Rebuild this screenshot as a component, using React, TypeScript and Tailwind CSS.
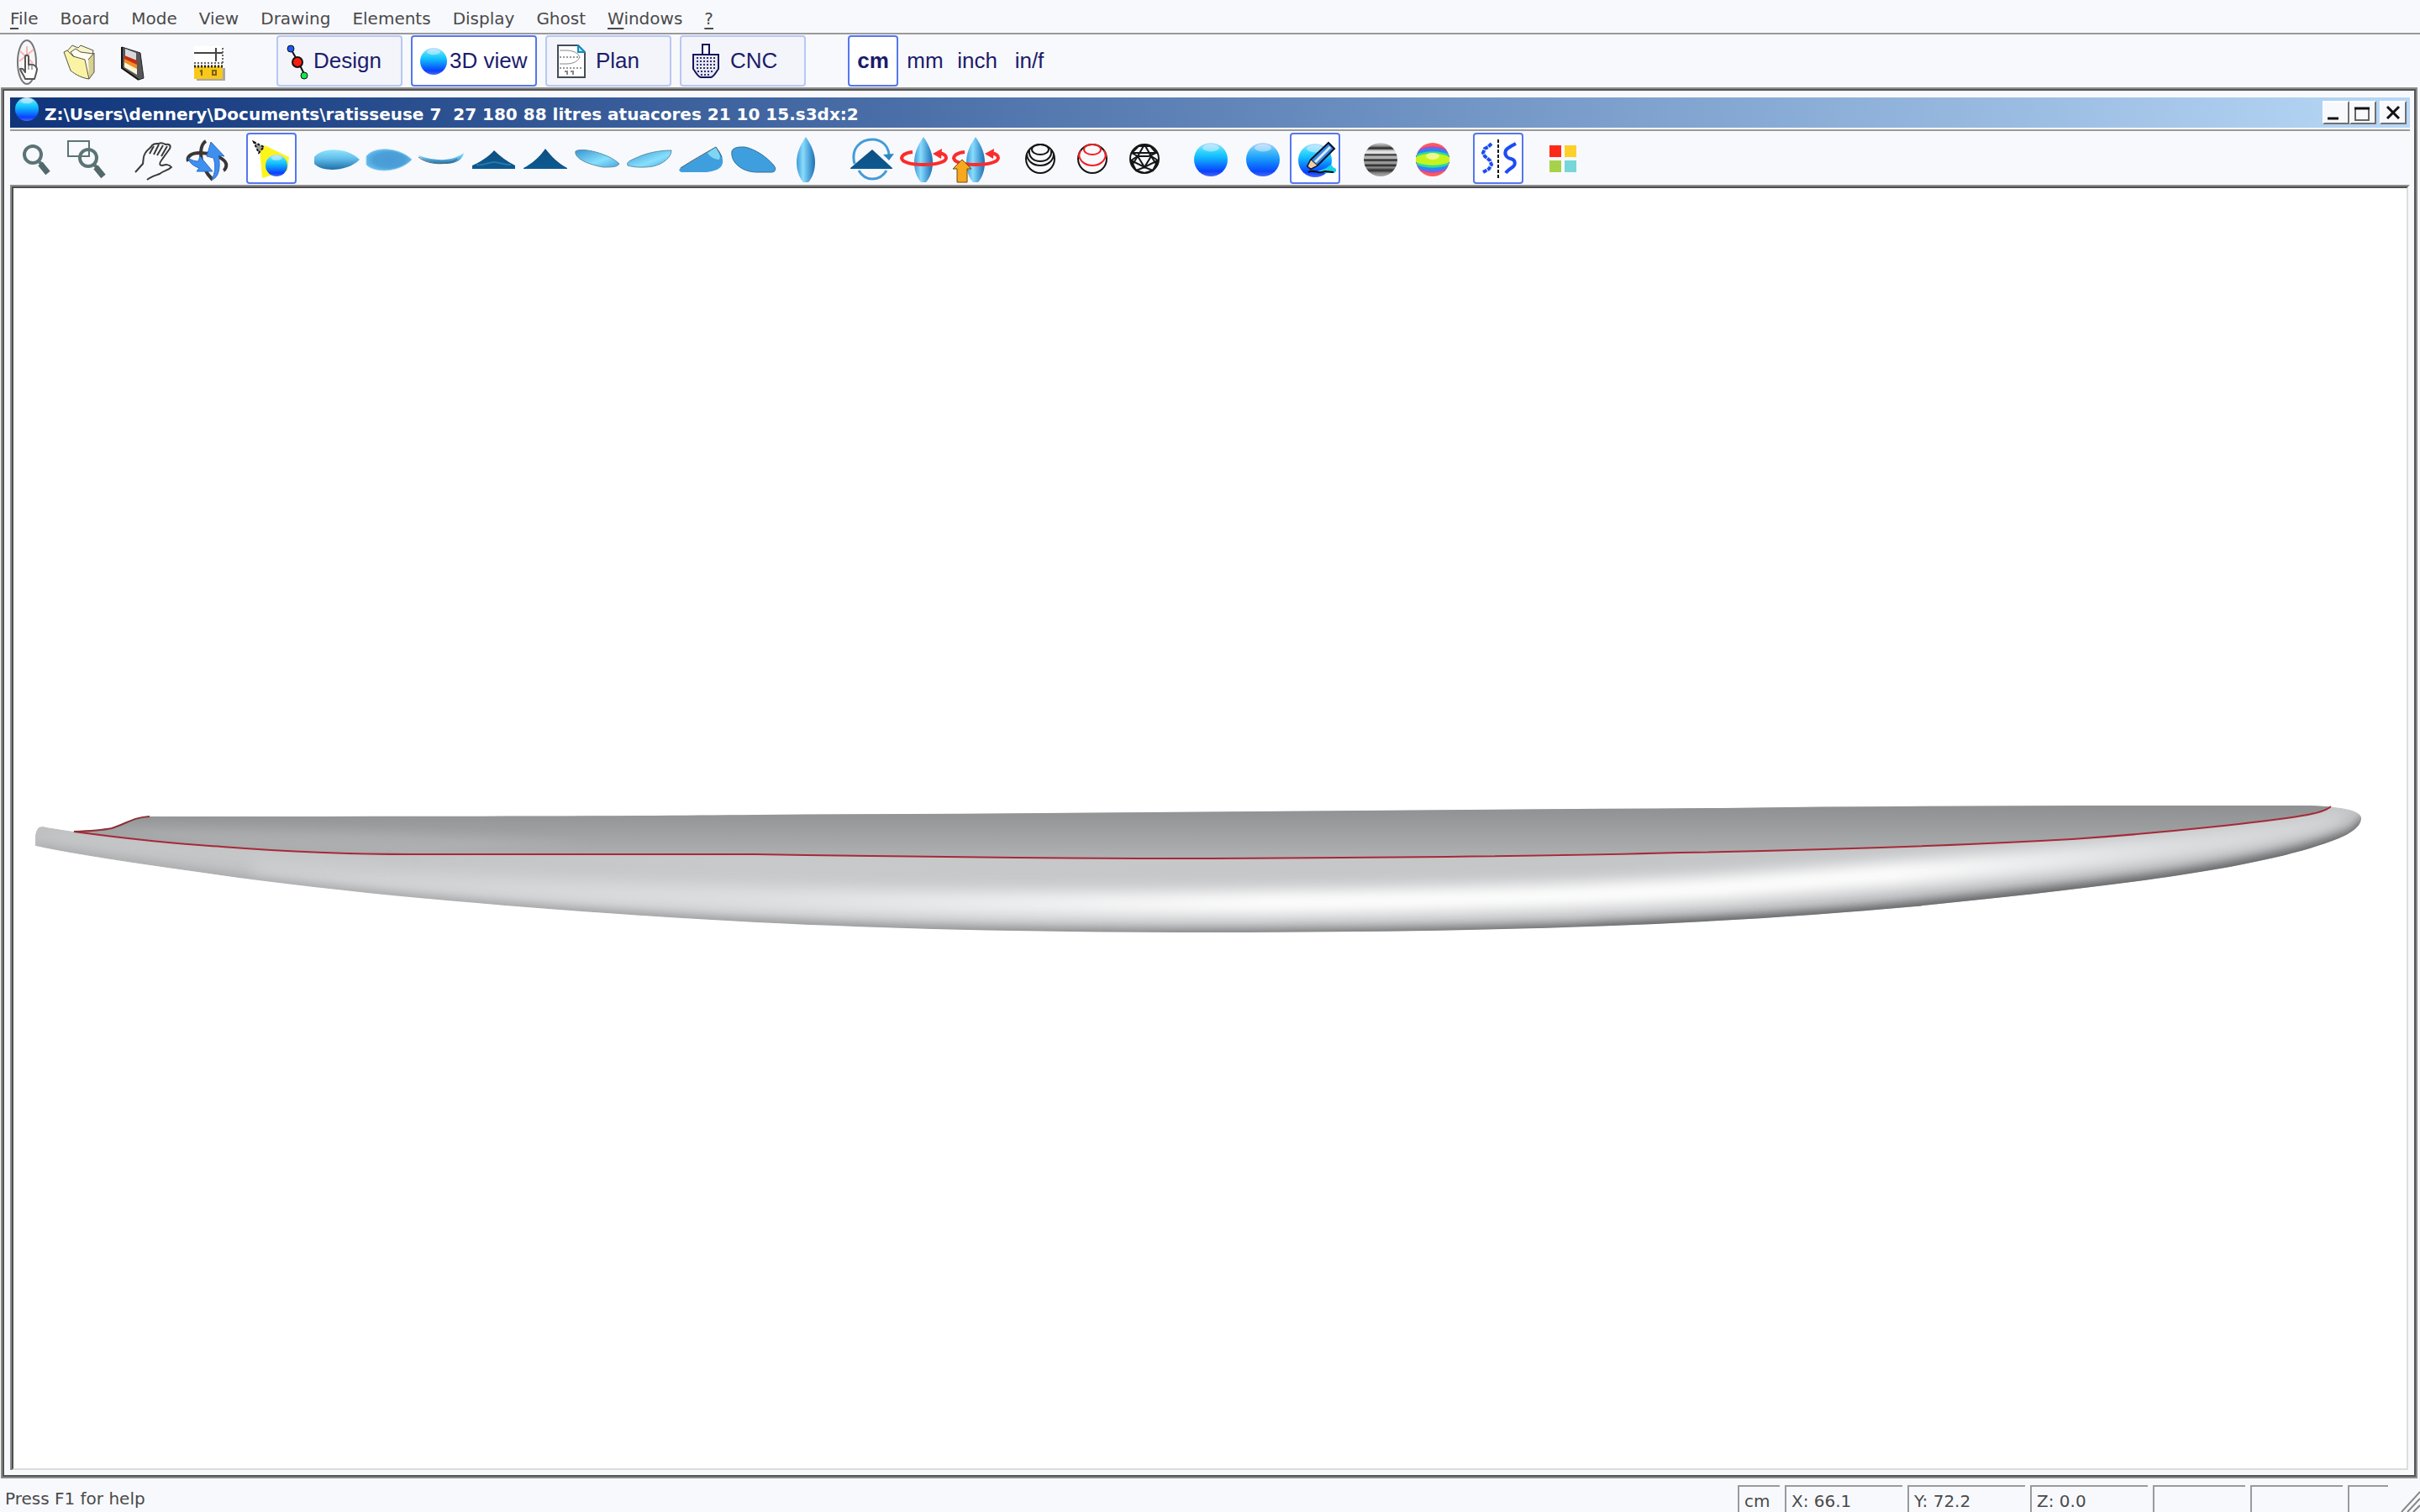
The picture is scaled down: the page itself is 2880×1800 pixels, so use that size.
import type { ReactNode } from 'react'
import clsx from 'clsx'

const menus = ['_File', 'Board', 'Mode', 'View', 'Drawing', 'Elements', 'Display', 'Ghost', '_Windows', '_?']

function Defs() {
  return (
    <svg className="absolute h-0 w-0" aria-hidden="true">
      <defs>
        <linearGradient id="ball" x1="0" y1="0" x2="0" y2="1">
          <stop offset="0" stopColor="#b8dcff" />
          <stop offset="0.22" stopColor="#3cd8fa" />
          <stop offset="0.4" stopColor="#14c0ff" />
          <stop offset="0.62" stopColor="#0c84ff" />
          <stop offset="0.85" stopColor="#0a40ff" />
          <stop offset="1" stopColor="#4a6cf0" />
        </linearGradient>
        <linearGradient id="ballDim" x1="0" y1="0" x2="0" y2="1">
          <stop offset="0" stopColor="#b8d4fc" />
          <stop offset="0.25" stopColor="#48bcf8" />
          <stop offset="0.5" stopColor="#1496fc" />
          <stop offset="0.85" stopColor="#0a48ff" />
          <stop offset="1" stopColor="#4a6cf0" />
        </linearGradient>
        <linearGradient id="deck" x1="0" y1="0" x2="0" y2="1">
          <stop offset="0" stopColor="#8fe6fc" />
          <stop offset="0.45" stopColor="#62bcea" />
          <stop offset="1" stopColor="#1d6fa8" />
        </linearGradient>
        <linearGradient id="thin" x1="0" y1="0" x2="1" y2="1">
          <stop offset="0" stopColor="#3a94d2" />
          <stop offset="0.6" stopColor="#86e0fc" />
          <stop offset="1" stopColor="#4aa4dc" />
        </linearGradient>
        <radialGradient id="bottom">
          <stop offset="0" stopColor="#4a9ad4" />
          <stop offset="0.7" stopColor="#4ba0da" />
          <stop offset="1" stopColor="#5fb6e8" />
        </radialGradient>
        <linearGradient id="up" x1="0" y1="0" x2="1" y2="0">
          <stop offset="0" stopColor="#3f9bd8" />
          <stop offset="0.35" stopColor="#8adcfb" />
          <stop offset="0.7" stopColor="#4aa0d8" />
          <stop offset="1" stopColor="#1f6fae" />
        </linearGradient>
        <linearGradient id="peak" x1="0" y1="0" x2="0" y2="1">
          <stop offset="0" stopColor="#0f4f80" />
          <stop offset="1" stopColor="#0b5a92" />
        </linearGradient>
        <linearGradient id="stripes" x1="0" y1="0" x2="0" y2="1">
          <stop offset="0" stopColor="#d8d8d8" />
          <stop offset="0.1" stopColor="#8a8a8a" />
          <stop offset="0.16" stopColor="#222" />
          <stop offset="0.24" stopColor="#d8d8d8" />
          <stop offset="0.31" stopColor="#e8e8e8" />
          <stop offset="0.35" stopColor="#222" />
          <stop offset="0.41" stopColor="#b4b4b4" />
          <stop offset="0.47" stopColor="#aaa" />
          <stop offset="0.51" stopColor="#1c1c1c" />
          <stop offset="0.57" stopColor="#9a9a9a" />
          <stop offset="0.62" stopColor="#999" />
          <stop offset="0.67" stopColor="#1c1c1c" />
          <stop offset="0.73" stopColor="#909090" />
          <stop offset="0.82" stopColor="#2c2c2c" />
          <stop offset="0.9" stopColor="#8a8a8a" />
          <stop offset="1" stopColor="#aaa" />
        </linearGradient>
      </defs>
    </svg>
  )
}

function Icon({ children }: { children: ReactNode }) {
  return (
    <svg viewBox="0 0 60 60" className="h-[60px] w-[60px] shrink-0" fill="none" aria-hidden="true">
      {children}
    </svg>
  )
}

function Ball({ cx = 30, cy = 31, r = 20, fill = 'url(#ball)' }: { cx?: number; cy?: number; r?: number; fill?: string }) {
  return (
    <>
      <circle cx={cx} cy={cy} r={r} fill={fill} />
      <ellipse cx={cx} cy={cy - r * 0.7} rx={r * 0.5} ry={r * 0.22} fill="#e8f4ff" opacity="0.5" />
    </>
  )
}

function RedRing({ children }: { children: ReactNode }) {
  return (
    <>
      <path d="M17 22C8 23 4 26 4 30" stroke="#fb2c2c" strokeWidth="4" />
      {children}
      <path d="M4 29C4 34 15 37 30 37s27-3 27-8c0-3-3-5-8-6" stroke="#fb2c2c" strokeWidth="4" />
      <path d="M41 24l11-6-1 12z" fill="#fb2c2c" />
    </>
  )
}

const upright = 'M30 4C37 14 41 24 41 34c0 10-3 18-8 24h-6c-5-6-8-14-8-24C19 24 23 14 30 4Z'

const icons: Record<string, ReactNode> = {
  Zoom: (
    <>
      <circle cx="26" cy="25" r="10" stroke="#5b7476" strokeWidth="4" />
      <path d="M33 33l4 4" stroke="#5b7476" strokeWidth="4" />
      <path d="M35 36l9 11" stroke="#52696b" strokeWidth="7" />
    </>
  ),
  'Zoom window': (
    <>
      <rect x="6" y="9" width="25" height="18" stroke="#5b7476" strokeWidth="2" />
      <circle cx="30" cy="29" r="10" stroke="#5b7476" strokeWidth="4" />
      <path d="M37 37l4 4" stroke="#5b7476" strokeWidth="4" />
      <path d="M39 40l9 11" stroke="#52696b" strokeWidth="7" />
    </>
  ),
  Pan: (
    <g stroke="#3a3a3a" strokeWidth="2" strokeLinejoin="round">
      <path d="M8 46l9-10c1-6 0-9 3-13 2-4 6-5 8-9 3-3 6-2 8-2 3-2 6 0 8 1 4-1 7 1 5 5L39 32c-3 4-2 6 1 6 4-1 8-2 11 2-4 4-9 4-14 8-5 2-10 3-15 7" />
      <path d="M30 15l-5 9M36 13l-6 12M41 14l-7 12M46 15l-7 12" />
    </g>
  ),
  Rotate: (
    <>
      <path d="M30 9c-7 4-8 18-2 32 3 6 6 10 10 14" stroke="#3a3636" strokeWidth="4" />
      <path d="M9 33c-2-6 4-10 14-10 15 0 30 7 31 13 1 3-1 7-3 8" stroke="#3a3636" strokeWidth="4" />
      <path d="M36 10l16 17-7-1c3 15 0 27-8 29 4-8 5-17 2-26l-8-2z" fill="#3f8fee" stroke="#2a6ed0" strokeWidth="1" />
      <path d="M23 27l15 18H19l3-4c-6-2-12-6-13-12 4 3 8 4 12 4z" fill="#3f8fee" stroke="#2a6ed0" strokeWidth="1" />
    </>
  ),
  Light: (
    <>
      <path d="M16 18l6-4 29 14-2 16-30 9z" fill="#fdf41c" />
      <path d="M9 10l12 6-6 7z" fill="#999" stroke="#111" strokeWidth="2" strokeDasharray="3 2" />
      <Ball cx={36} cy={38} r={13} />
    </>
  ),
  Top: <path d="M3 28C12 16 42 16 57 31C42 46 12 46 3 36Z" fill="url(#deck)" />,
  Bottom: <path d="M3 27C12 15 42 16 57 31C42 47 12 47 3 37Z" fill="url(#bottom)" stroke="#8fd0f0" strokeWidth="1" />,
  Side: (
    <>
      <path d="M3 26c13 5 31 7 42 3 6-2 9-4 12-6-1 7-8 13-22 13C19 36 8 33 3 26Z" fill="url(#deck)" />
      <path d="M3 28c12 10 36 10 46 2" stroke="#4f6270" strokeWidth="1" />
    </>
  ),
  Front: (
    <>
      <path d="M31 20c7 7 15 13 25 18v4H5v-4c9-4 19-10 26-18Z" fill="url(#peak)" />
      <path d="M10 37c8 2 13-3 21-3s13 4 20 3" stroke="#2a76a8" strokeWidth="2" />
    </>
  ),
  Back: <path d="M30 18c7 9 15 17 26 23v1H4v-1c10-5 20-14 26-23Z" fill="url(#peak)" />,
  'View A': <path d="M4 21C12 16 44 24 56 36c-2 4-10 4-19 4C20 37 2 30 4 21Z" fill="url(#thin)" stroke="#5b8fa8" strokeWidth="1" />,
  'View B': <path d="M56 20c0 8-9 16-22 19-12 2-24 1-30-1-2-4 3-6 10-9 12-6 28-9 42-9Z" fill="url(#thin)" stroke="#5b8fa8" strokeWidth="1" />,
  'View C': (
    <>
      <path d="M47 16c7 7 10 16 7 22-3 5-10 7-18 8H6c-3-1-4-3 0-6z" fill="#3f9fde" />
      <path d="M47 16c4 6 6 11 4 15-6 0-12-4-14-8z" fill="#8fe4fa" opacity="0.8" />
      <path d="M5 41c12-8 28-17 42-25l7 12" stroke="#47606c" strokeWidth="1" />
    </>
  ),
  'View D': <path d="M4 21c2-5 8-5 15-5 12 2 27 12 35 22 3 4 2 8-3 8H34C17 46 2 35 4 21Z" fill="#3f9fde" stroke="#2f6f9c" strokeWidth="1" />,
  'View E': <path d={upright} fill="url(#up)" />,
  Roll: (
    <>
      <path d="M10 36C5 17 18 7 31 7c12 0 19 8 20 18M15 44c4 7 10 10 16 10s13-3 17-10" stroke="#449cd6" strokeWidth="3" />
      <path d="M44 25l13-1-6 8z" fill="#2f86c4" />
      <path d="M31 19l24 22v1H5v-1z" fill="url(#peak)" />
    </>
  ),
  Spin: (
    <RedRing>
      <path d={upright} fill="url(#up)" />
    </RedRing>
  ),
  'Spin up': (
    <>
      <RedRing>
        <path d={upright} fill="url(#up)" />
      </RedRing>
      <path d="M14 31l11 11h-5v16H8V42H3z" fill="#f7a81c" stroke="#6b4a10" strokeWidth="1" />
    </>
  ),
  Slices: (
    <g stroke="#151515" strokeWidth="2">
      <circle cx="29" cy="30" r="17" />
      <ellipse cx="29" cy="19" rx="10" ry="6" />
      <path d="M16 20c-1 8 5 13 13 13s14-5 13-13" />
      <path d="M13 24c0 9 8 14 16 14s16-5 16-14" />
    </g>
  ),
  'Red slices': (
    <g strokeWidth="2">
      <circle cx="29" cy="30" r="17" stroke="#151515" />
      <g stroke="#f42020">
        <ellipse cx="29" cy="19" rx="10" ry="6" />
        <path d="M13 24c0 9 8 14 16 14s16-5 16-14" />
        <path d="M15 20c-1 3-2 5-2 8M43 20c1 3 2 5 2 8" />
      </g>
    </g>
  ),
  Mesh: (
    <g stroke="#151515" strokeWidth="2">
      <circle cx="29" cy="30" r="17" />
      <path d="M22 15l14 0 7 8-9 4H21l-7-4zM21 27l8 13 8-13 8 5-6 12-10-4-10 4-6-12zM29 13l-8 14M29 13l8 14M19 44l10 3 10-3M13 32l16 8 16-8" />
      <path d="M14 23l30 0M14 38l7-11M44 38l-7-11" />
    </g>
  ),
  Smooth: <Ball />,
  Shaded: <Ball fill="url(#ballDim)" />,
  Paint: (
    <>
      <Ball cy={32} />
      <path d="M30 47c4-4 12-4 16-8 3-3 5-1 5 1 4 1 6 4 2 7H32z" fill="#16d4e4" />
      <path d="M22 46c8-4 10 3 20-1l10 1" stroke="#0a0a14" strokeWidth="2" />
      <path d="M21 39l4-8L46 11l7 7-20 20-8 4z" fill="#3a8ae0" stroke="#08102a" strokeWidth="2" />
      <path d="M30 34l18-18" stroke="#d8ecff" strokeWidth="3" />
      <path d="M25 31l8 7-8 4-4-3z" fill="#f2cfa0" stroke="#08102a" strokeWidth="1" />
    </>
  ),
  Zebra: <circle cx="30" cy="31" r="20" fill="url(#stripes)" />,
  Curvature: (
    <>
      <circle cx="30" cy="31" r="20" fill="#ff5a5a" />
      <path d="M15 18c9-4 21-4 30 0l5 9v8l-5 9c-9 4-21 4-30 0l-5-9v-8z" fill="#b24cc8" />
      <path d="M13 21c10-5 24-5 34 0l3 8v4l-3 8c-10 5-24 5-34 0l-3-8v-4z" fill="#2c86f4" />
      <path d="M11 25c11-5 27-5 38 0v12c-11 5-27 5-38 0z" fill="#2cdc9c" />
      <path d="M10 28c12-6 28-6 40 0v6c-12 5-28 5-40 0z" fill="#c4f41c" />
      <ellipse cx="30" cy="27" rx="8" ry="4" fill="#eef88c" />
    </>
  ),
  Symmetry: (
    <>
      <path d="M22 12l-4 4-4 2-2 5 2 4 6 5 2 5-3 5-7 4" stroke="#1c4cf4" strokeWidth="4" strokeDasharray="5 1" />
      <path d="M30 7v47" stroke="#141414" strokeWidth="2" strokeDasharray="4 2" />
      <path d="M51 12c-4 2-9 4-12 8-2 5 1 9 6 10 7 2 5 8 2 10-3 2-6 4-8 7" stroke="#1c4cf4" strokeWidth="4" />
    </>
  ),
  Colors: (
    <>
      <path d="M13 14h14v14H13z" fill="#fd2a1a" />
      <path d="M31 14h14v14H31z" fill="#fdd02c" />
      <path d="M13 32h14v14H13z" fill="#a6d24a" />
      <path d="M31 32h14v14H31z" fill="#76d6d8" />
    </>
  ),
  New: (
    <>
      <ellipse cx="29" cy="31" rx="11" ry="26" fill="#f6f6f8" stroke="#777" strokeWidth="2" />
      <path d="M21 18l15 14M37 16L20 30M29 12v20" stroke="#ff9a94" strokeWidth="2" opacity="0.7" />
      <path d="M27 43V25c0-3 4-3 4 0v9c5-1 9 1 10 5 0 4-2 8-3 12H27c-2-5-5-8-6-12 2-1 4 0 6 4Z" fill="#fff" stroke="#555" strokeWidth="2" strokeLinejoin="round" />
      <path d="M31 34v6M35 35v5" stroke="#555" strokeWidth="1" />
    </>
  ),
  Open: (
    <g stroke="#55554c" strokeWidth="1" strokeLinejoin="round">
      <path d="M13 20l8-9 7 3 3-3 15 6-6 34z" fill="#f8f6c8" />
      <path d="M19 19l6-4 6 4 15 2-5 28z" fill="#fffdf0" />
      <path d="M11 19l4-2 7 7 14 4 5 23c-8-1-16-5-22-10z" fill="#fbf3a4" />
      <path d="M41 51l6-8V20l-7 8" fill="#d8d090" />
    </g>
  ),
  Save: (
    <>
      <path d="M18 13l22 7 4 30-6 2-20-14z" fill="#56565a" stroke="#222" strokeWidth="1" />
      <path d="M22 15l13 5v9l-13-5z" fill="#d8d8dc" />
      <path d="M21 23l15 6v5l-15-7z" fill="#c82c10" />
      <path d="M21 27l15 7v5l-15-8z" fill="#f88c1c" />
      <path d="M21 31l15 8v7l-15-9z" fill="#fff4d0" />
      <path d="M18 13v25l20 14" stroke="#111" strokeWidth="2" />
    </>
  ),
  Measure: (
    <>
      <path d="M12 12h33v20H12z" fill="#fff" />
      <path d="M12 20h34M38 14v16" stroke="#444" strokeWidth="2" />
      <path d="M12 32h34M46 14v18" stroke="#666" strokeWidth="2" strokeDasharray="2 2" />
      <path d="M15 38h34v15H15z" fill="#a8a8a4" />
      <path d="M12 36h34v15H12z" fill="#f8c81c" />
      <path d="M12 36h34" stroke="#222" strokeWidth="3" strokeDasharray="2 2" />
      <path d="M19 42l2-1v6M34 41h4v5h-4z" stroke="#7c6410" strokeWidth="2" />
    </>
  ),
}

const btn = 'flex h-[61px] items-center justify-center rounded-sm border-2'
const idle = 'border-transparent'
const active = 'border-[#5577ee] bg-white'

function ToolButton({ name, on }: { name: string; on?: boolean }) {
  return (
    <button type="button" aria-label={name} aria-pressed={!!on} className={clsx(btn, 'w-[60px]', on ? active : idle)}>
      <Icon>{icons[name]}</Icon>
    </button>
  )
}

const viewTools = [
  ['Zoom', 'Zoom window'],
  ['Pan', 'Rotate'],
  ['Light'],
  ['Top', 'Bottom', 'Side', 'Front', 'Back', 'View A', 'View B', 'View C', 'View D', 'View E'],
  ['Roll', 'Spin', 'Spin up'],
  ['Slices', 'Red slices', 'Mesh'],
  ['Smooth', 'Shaded', 'Paint'],
  ['Zebra', 'Curvature'],
  ['Symmetry'],
  ['Colors'],
]
const pressed = ['Light', 'Paint', 'Symmetry']

const modes: { name: string; icon: ReactNode; inset: string }[] = [
  {
    name: 'Design',
    inset: 'pl-2',
    icon: (
      <svg viewBox="0 0 34 46" className="h-[46px] w-[34px]" aria-hidden="true">
        <path d="M7 8l9 16 8 16" stroke="#111" strokeWidth="2" fill="none" />
        <circle cx="7" cy="8" r="4" fill="#2058f8" stroke="#111" />
        <circle cx="15" cy="24" r="6" fill="#fb1c10" stroke="#111" strokeWidth="2" />
        <circle cx="23" cy="40" r="4" fill="#10e850" stroke="#111" />
      </svg>
    ),
  },
  {
    name: '3D view',
    inset: 'pl-2 gap-[2px]',
    icon: (
      <svg viewBox="0 0 34 34" className="h-[34px] w-[34px]" aria-hidden="true">
        <Ball cx={17} cy={17} r={16} />
      </svg>
    ),
  },
  {
    name: 'Plan',
    inset: 'pl-3 gap-3',
    icon: (
      <svg viewBox="0 0 34 40" className="h-[40px] w-[34px]" fill="none" aria-hidden="true">
        <path d="M1 1h24l8 9v29H1z" fill="#fff" stroke="#444c54" strokeWidth="2" />
        <path d="M25 1v8h8z" fill="#9ce4f8" stroke="#1888b4" strokeWidth="2" />
        <path d="M3 7h8c8 0 14 3 16 8-2 5-8 8-16 8H3" stroke="#888" strokeWidth="1" />
        <path d="M3 15h24M3 28h26" stroke="#999" strokeWidth="2" strokeDasharray="2 2" />
        <path d="M9 32h3v4M16 32h3v4" stroke="#888" strokeWidth="2" />
      </svg>
    ),
  },
  {
    name: 'CNC',
    inset: 'pl-3 gap-3',
    icon: (
      <svg viewBox="0 0 34 42" className="h-[42px] w-[34px]" fill="none" aria-hidden="true">
        <path d="M13 13V1h8v12" fill="#fff" stroke="#14145c" strokeWidth="2" />
        <path d="M2 13h30v17c-3 4-5 9-9 10H11c-4-1-6-6-9-10z" fill="#e8e8f4" stroke="#14145c" strokeWidth="2" />
        <path d="M6 17h24M6 21h24M6 25h24M6 29h24M7 33h20M11 37h12" stroke="#30306c" strokeWidth="2" strokeDasharray="2 2" />
      </svg>
    ),
  },
]

const hull =
  'M46 985Q50 983 56 985L88 990Q118 989 133 986C152 980 158 973 178 972C420 972 700 972 900 970C1300 968 1700 964 2050 962C2280 959 2520 959 2740 959C2775 959 2808 963 2810 973C2811 982 2800 990 2790 995C2700 1035 2500 1056 2280 1079C2000 1105 1700 1110 1440 1110C1250 1110 1060 1106 900 1098C620 1083 400 1062 235 1038C160 1028 90 1017 42 1007V994Q43 988 46 985Z'
const apex =
  'M88 990C140 997 200 1004 264 1008C330 1013 410 1017 488 1017L900 1017C1080 1020 1240 1022 1440 1022C1640 1021 1860 1019 2000 1015C2180 1012 2340 1006 2466 999C2570 992 2700 978 2740 971Q2766 967 2774 960'

function Board() {
  return (
    <svg viewBox="16 224 2848 1524" className="block h-auto w-full" role="img" aria-label="Board">
      <defs>
        <clipPath id="hull">
          <path d={hull} />
        </clipPath>
        <clipPath id="deckClip">
          <path d={apex + 'V900H88Z'} />
        </clipPath>
        <linearGradient id="deckShade" x1="0" y1="958" x2="0" y2="1022" gradientUnits="userSpaceOnUse">
          <stop offset="0" stopColor="#8e9092" />
          <stop offset="0.25" stopColor="#969798" />
          <stop offset="1" stopColor="#b0b1b3" />
        </linearGradient>
        <linearGradient id="body" x1="0" y1="0" x2="1" y2="0">
          <stop offset="0" stopColor="#c0c1c3" />
          <stop offset="0.3" stopColor="#c8c9cb" />
          <stop offset="1" stopColor="#c2c3c5" />
        </linearGradient>
        <linearGradient id="shine" x1="300" y1="0" x2="2810" y2="0" gradientUnits="userSpaceOnUse">
          <stop offset="0" stopColor="#d4d5d7" stopOpacity="0.6" />
          <stop offset="0.25" stopColor="#e0e1e3" />
          <stop offset="0.48" stopColor="#fff" />
          <stop offset="0.78" stopColor="#fff" />
          <stop offset="0.9" stopColor="#e0e1e3" />
          <stop offset="1" stopColor="#d0d1d3" />
        </linearGradient>
        <linearGradient id="rim" x1="42" y1="0" x2="2810" y2="0" gradientUnits="userSpaceOnUse">
          <stop offset="0" stopColor="#8d8e90" stopOpacity="0.4" />
          <stop offset="0.4" stopColor="#737476" stopOpacity="0.7" />
          <stop offset="0.7" stopColor="#58595b" />
          <stop offset="1" stopColor="#606163" />
        </linearGradient>
        <filter id="soft" x="0" y="900" width="2880" height="300" filterUnits="userSpaceOnUse">
          <feGaussianBlur stdDeviation="9" />
        </filter>
        <filter id="softer" x="0" y="900" width="2880" height="300" filterUnits="userSpaceOnUse">
          <feGaussianBlur stdDeviation="6" />
        </filter>
      </defs>
      <g clipPath="url(#hull)" fill="none">
        <path d={hull} fill="url(#body)" />
        <path
          d="M300 1036C600 1066 1000 1078 1400 1076C1700 1074 1900 1067 2050 1057C2300 1038 2560 1018 2790 980"
          stroke="url(#shine)"
          strokeWidth="30"
          filter="url(#soft)"
        />
        <path
          d="M42 1012C90 1022 160 1033 235 1043C400 1067 620 1088 900 1103C1060 1111 1250 1115 1440 1115C1700 1115 2000 1110 2280 1084C2500 1061 2700 1040 2800 998L2822 976"
          stroke="url(#rim)"
          strokeWidth="18"
          filter="url(#softer)"
        />
        <path
          d="M1900 1116C2060 1109 2180 1098 2290 1084C2500 1061 2700 1038 2800 996"
          stroke="#66676a"
          strokeWidth="20"
          opacity="0.6"
          filter="url(#soft)"
        />
        <path d="M42 998C200 1020 380 1040 500 1030C380 1016 200 1005 88 990Z" fill="#cbccce" opacity="0.4" filter="url(#softer)" />
        <g clipPath="url(#deckClip)">
          <path d="M80 950H2800V1030H80Z" fill="url(#deckShade)" />
          <path d="M88 985C300 985 500 990 700 1005L500 1017L264 1008Z" fill="#b4b5b7" opacity="0.5" filter="url(#softer)" />
        </g>
      </g>
      <path d={apex} fill="none" stroke="#a52a38" strokeWidth="2" />
      <path d="M88 990Q118 989 133 986C152 980 158 973 178 972" fill="none" stroke="#8c3038" strokeWidth="2" />
    </svg>
  )
}

const winBtn =
  'flex h-7 w-8 items-center justify-center border-2 border-t-white border-l-white border-r-[#707074] border-b-[#707074] bg-[#f8f9fd]'

const fields = [
  ['cm', 'w-[50px]'],
  ['X: 66.1', 'w-[140px]'],
  ['Y: 72.2', 'w-[140px]'],
  ['Z: 0.0', 'w-[140px]'],
  ['', 'w-[110px]'],
  ['', 'w-[110px]'],
  ['', 'w-[48px]'],
]

export default function App() {
  return (
    <div className="flex min-h-screen flex-col overflow-hidden bg-[#f8f9fd] font-['DejaVu_Sans',sans-serif] text-[20px] text-[#4a4a4a]">
      <Defs />
      <nav className="flex h-[41px] items-center gap-[26px] border-b-2 border-[#9a9a9a] pt-1 pl-3">
        {menus.map((m) => (
          <button key={m} type="button">
            {m[0] === '_' ? (
              <>
                <span className="underline underline-offset-4">{m[1]}</span>
                {m.slice(2)}
              </>
            ) : (
              m
            )}
          </button>
        ))}
      </nav>

      <div className="flex h-[63px] items-center gap-[2px] pl-[3px] font-['Liberation_Sans',sans-serif] text-[26px] text-[#1c1c6c]">
        <ToolButton name="New" />
        <ToolButton name="Open" />
        <ToolButton name="Save" />
        <div className="w-7" />
        <ToolButton name="Measure" />
        <div className="ml-12 flex gap-[10px]">
          {modes.map((m) => (
            <button
              key={m.name}
              type="button"
              className={clsx(
                'flex h-[61px] w-[150px] items-center rounded-sm border-2 whitespace-nowrap',
                m.inset,
                m.name === '3D view' ? active : 'border-[#b8c8f4] bg-[#f3f5fa]',
              )}
            >
              {m.icon}
              {m.name}
            </button>
          ))}
        </div>
        <div className="ml-12 flex gap-[2px]">
          {['cm', 'mm', 'inch', 'in/f'].map((u) => (
            <button key={u} type="button" className={clsx(btn, 'w-[60px]', u === 'cm' ? active + ' font-bold' : idle)}>
              {u}
            </button>
          ))}
        </div>
      </div>

      <main className="mr-[3px] ml-px flex flex-1 flex-col border-2 border-[#8c8c8c]">
        <div className="flex flex-1 flex-col border-2 border-[#555] pt-2 pr-[5px] pb-[6px] pl-[7px]">
          <header className="flex h-9 items-center bg-linear-to-r from-[#10347a] to-[#b8d8f6] pr-1 pl-[5px] text-white">
            <svg viewBox="0 0 30 30" className="mb-2 h-[30px] w-[30px]" aria-hidden="true">
              <Ball cx={15} cy={15} r={14} />
            </svg>
            <h1 className="flex-1 pt-1 pl-[6px] font-bold whitespace-pre">
              {'Z:\\Users\\dennery\\Documents\\ratisseuse 7  27 180 88 litres atuacores 21 10 15.s3dx:2'}
            </h1>
            <button type="button" aria-label="Minimize" className={winBtn}>
              <svg viewBox="0 0 28 24" className="h-6 w-7" aria-hidden="true">
                <path d="M4 19h13" stroke="#111" strokeWidth="3" />
              </svg>
            </button>
            <button type="button" aria-label="Maximize" className={winBtn}>
              <svg viewBox="0 0 28 24" className="h-6 w-7" fill="none" aria-hidden="true">
                <path d="M5 8v13h16V8" stroke="#666" strokeWidth="2" />
                <path d="M4 7h18" stroke="#111" strokeWidth="3" />
              </svg>
            </button>
            <button type="button" aria-label="Close" className={winBtn + ' ml-1'}>
              <svg viewBox="0 0 28 24" className="h-6 w-7" aria-hidden="true">
                <path d="M7 5l14 14M21 5L7 19" stroke="#111" strokeWidth="3" />
              </svg>
            </button>
          </header>

          <div className="mt-[2px] flex gap-[18px] border-t-2 border-[#9a9a9a] pt-[2px] pb-px pl-px">
            {viewTools.map((group) => (
              <div key={group[0]} className="flex gap-[2px]">
                {group.map((t) => (
                  <ToolButton key={t} name={t} on={pressed.includes(t)} />
                ))}
              </div>
            ))}
          </div>

          <div className="flex flex-1 flex-col border-2 border-t-[#8c8c8c] border-r-[#f8f9fd] border-b-0 border-l-[#8c8c8c]">
            <div className="flex-1 border-2 border-t-[#4d4d4d] border-r-[#dcdcdc] border-b-[#dcdcdc] border-l-[#4d4d4d] bg-white">
              <Board />
            </div>
          </div>
        </div>
      </main>

      <footer className="flex h-10 items-end gap-[6px] pl-[6px]">
        <p className="flex-1 self-center pt-2">Press F1 for help</p>
        {fields.map(([text, w], i) => (
          <div key={i} className={clsx('flex h-8 items-center border-t-2 border-l-2 border-[#9a9a9a] pt-1 pl-[6px]', w)}>
            {text}
          </div>
        ))}
        <svg viewBox="0 0 32 32" className="h-8 w-8" aria-hidden="true">
          <path d="M10 32L32 8M17 32L32 16M24 32L32 24" stroke="#888" strokeWidth="2" />
        </svg>
      </footer>
    </div>
  )
}
